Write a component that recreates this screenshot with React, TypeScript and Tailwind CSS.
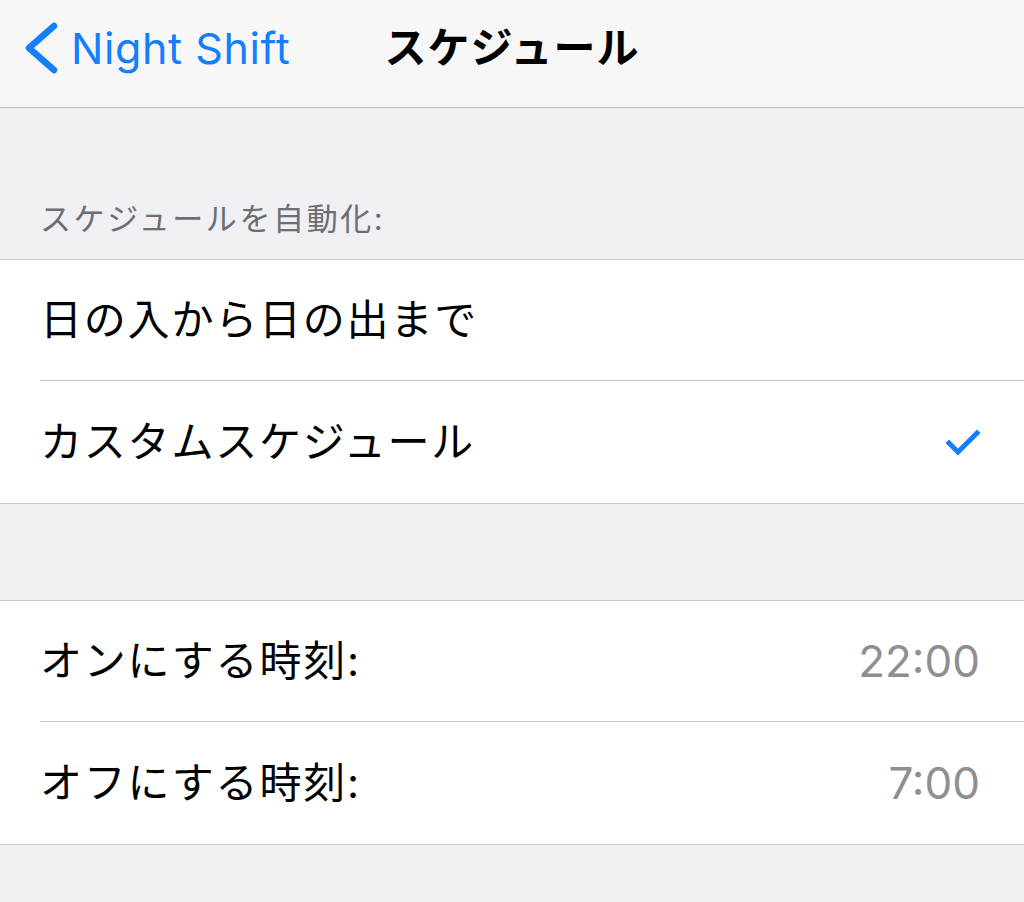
import React from 'react';

const font = "font-['Inter','Noto_Sans_CJK_JP',sans-serif]";

type Row = { label: string; value?: string; checked?: boolean };

const autoRows: Row[] = [
  { label: '日の入から日の出まで' },
  { label: 'カスタムスケジュール', checked: true },
];

const timeRows: Row[] = [
  { label: 'オンにする時刻:', value: '22:00' },
  { label: 'オフにする時刻:', value: '7:00' },
];

const Check = () => (
  <svg width="40" height="32" viewBox="0 0 40 32" fill="none">
    <polyline points="6,17 15,26 34,7" stroke="#157efb" strokeWidth="5" strokeLinecap="square" strokeLinejoin="miter" />
  </svg>
);

const Group = ({ rows }: { rows: Row[] }) => (
  <div className="bg-white border-y border-[#c8c7cc] pl-[40px]">
    {rows.map((row, i) => (
      <div
        key={i}
        className={`flex items-center justify-between pr-[44px] ${i < rows.length - 1 ? 'h-[121px] border-b border-[#c8c7cc]' : 'h-[122px]'}`}
      >
        <span className="text-[42px] leading-none tracking-[1.8px] text-black">{row.label}</span>
        {row.value && <span className="text-[44px] leading-none text-[#8e8e93]">{row.value}</span>}
        {row.checked && (
          <span className="-mr-[3px]">
            <Check />
          </span>
        )}
      </div>
    ))}
  </div>
);

export default function App() {
  return (
    <div className={`w-[1024px] h-[902px] bg-[#efeff4] overflow-hidden ${font}`}>
      <div className="h-[108px] bg-[#f7f7f8] border-b border-[#b9b9bd]">
        <div className="h-[96px] grid grid-cols-[1fr_auto_1fr] items-center">
          <div className="flex items-center pl-[24px] gap-[13px] text-[#157efb]">
            <svg width="34" height="52" viewBox="0 0 34 52" fill="none">
              <polyline points="30,4 5,26 30,48" stroke="#157efb" strokeWidth="6.5" strokeLinecap="round" strokeLinejoin="round" />
            </svg>
            <span className="text-[43px] leading-none tracking-[0.6px]">Night Shift</span>
          </div>
          <span className="text-[42px] leading-none font-bold tracking-[1px] text-black">スケジュール</span>
          <div />
        </div>
      </div>
      <div className="h-[151px] flex items-end pl-[40px] pb-[20px]">
        <span className="text-[31px] leading-[40px] tracking-[2.6px] text-[#6d6d72]">スケジュールを自動化:</span>
      </div>
      <Group rows={autoRows} />
      <div className="h-[96px]" />
      <Group rows={timeRows} />
    </div>
  );
}
